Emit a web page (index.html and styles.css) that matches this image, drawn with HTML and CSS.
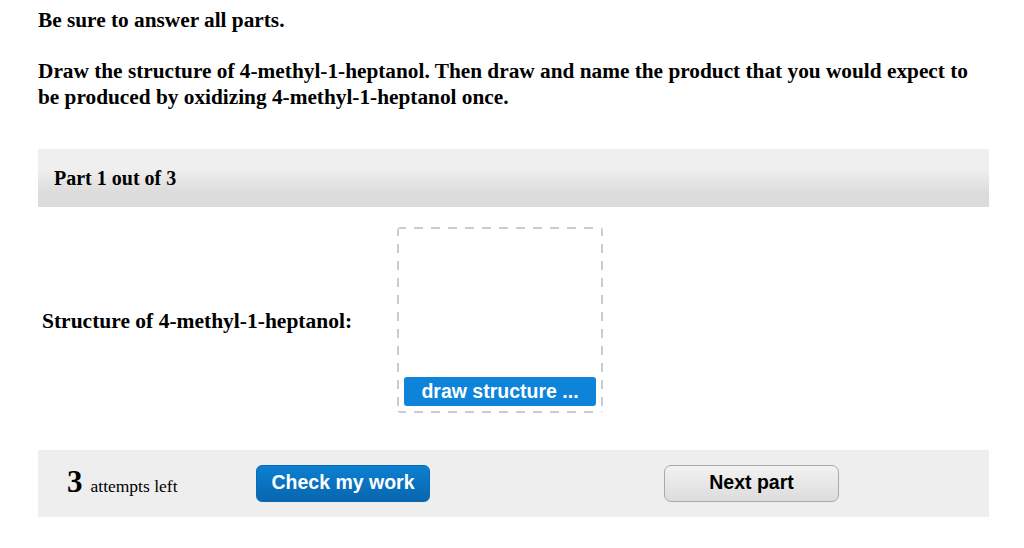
FILE: index.html
```html
<!DOCTYPE html>
<html>
<head>
<meta charset="utf-8">
<link rel="stylesheet" href="styles.css">
</head>
<body>
<div class="page">
  <p class="intro">Be sure to answer all parts.</p>
  <p class="question">Draw the structure of 4-methyl-1-heptanol. Then draw and name the product that you would expect to be produced by oxidizing 4-methyl-1-heptanol once.</p>
  <div class="part-header">Part 1 out of 3</div>
  <div class="part-body">
    <div class="label">Structure of 4-methyl-1-heptanol:</div>
    <div class="drawbox">
      <button class="draw-btn">draw structure ...</button>
    </div>
  </div>
  <div class="footer">
    <div class="attempts"><span class="num">3</span><span class="txt">attempts left</span></div>
    <button class="check-btn">Check my work</button>
    <button class="next-btn">Next part</button>
  </div>
</div>
</body>
</html>
```

FILE: styles.css
```css
html, body {
  margin: 0;
  padding: 0;
  background: #ffffff;
}
.page {
  width: 951px;
  padding-left: 38px;
  font-family: "Liberation Serif", "Times New Roman", serif;
  color: #000;
}
.intro {
  margin: 0;
  padding-top: 8px;
  font-size: 21.3px;
  font-weight: bold;
  line-height: 24px;
}
.question {
  margin: 26px 0 0 0;
  max-width: 935px;
  font-size: 21.3px;
  font-weight: bold;
  line-height: 26px;
}
.part-header {
  margin-top: 39px;
  height: 58px;
  box-sizing: border-box;
  padding-left: 16px;
  display: flex;
  align-items: center;
  font-size: 20px;
  font-weight: bold;
  background: linear-gradient(to bottom, #efefef 0%, #efefef 35%, #dcdcdc 75%, #dbdbdb 100%);
}
.part-body {
  display: flex;
  align-items: center;
  padding-top: 20px;
  height: 186px;
}
.label {
  width: 355px;
  padding-left: 4px;
  font-size: 21.5px;
  font-weight: bold;
  padding-top: 2px;
}
.drawbox {
  width: 206px;
  height: 186px;
  box-sizing: border-box;
  border-radius: 4px;
  background:
    repeating-linear-gradient(to right, #cccccc 0 9px, transparent 9px 17px) left top / 100% 2px no-repeat,
    repeating-linear-gradient(to right, #cccccc 0 9px, transparent 9px 17px) left bottom / 100% 2px no-repeat,
    repeating-linear-gradient(to bottom, #cccccc 0 9px, transparent 9px 17px) left top / 2px 100% no-repeat,
    repeating-linear-gradient(to bottom, #cccccc 0 9px, transparent 9px 17px) right top / 2px 100% no-repeat;
  display: flex;
  align-items: flex-end;
  justify-content: center;
  padding-bottom: 7px;
}
.draw-btn {
  width: 192px;
  height: 29px;
  border: none;
  border-radius: 3px;
  background: #0d84d9;
  color: #fff;
  font-family: "Liberation Sans", Arial, sans-serif;
  font-weight: bold;
  font-size: 19.5px;
  padding: 0;
}
.footer {
  margin-top: 37px;
  height: 67px;
  background: #eeeeee;
  display: flex;
  align-items: center;
}
.attempts {
  display: flex;
  align-items: baseline;
  padding-left: 29px;
  width: 189px;
  margin-top: -3px;
}
.num {
  font-size: 31px;
  font-weight: bold;
  margin-right: 8px;
}
.txt {
  font-size: 17.5px;
}
.check-btn {
  width: 174px;
  height: 37px;
  border: 1px solid #0a6ab5;
  border-radius: 6px;
  background: linear-gradient(to bottom, #0c7fd1, #0866af);
  color: #fff;
  font-family: "Liberation Sans", Arial, sans-serif;
  font-weight: bold;
  font-size: 19.5px;
  padding: 0 0 3px 0;
}
.next-btn {
  margin-left: 234px;
  width: 175px;
  height: 37px;
  border: 1px solid #a9a9a9;
  border-radius: 7px;
  background: linear-gradient(to bottom, #f2f2f2, #dcdcdc);
  color: #000;
  font-family: "Liberation Sans", Arial, sans-serif;
  font-weight: bold;
  font-size: 19.5px;
  padding: 0 0 3px 0;
}
```
